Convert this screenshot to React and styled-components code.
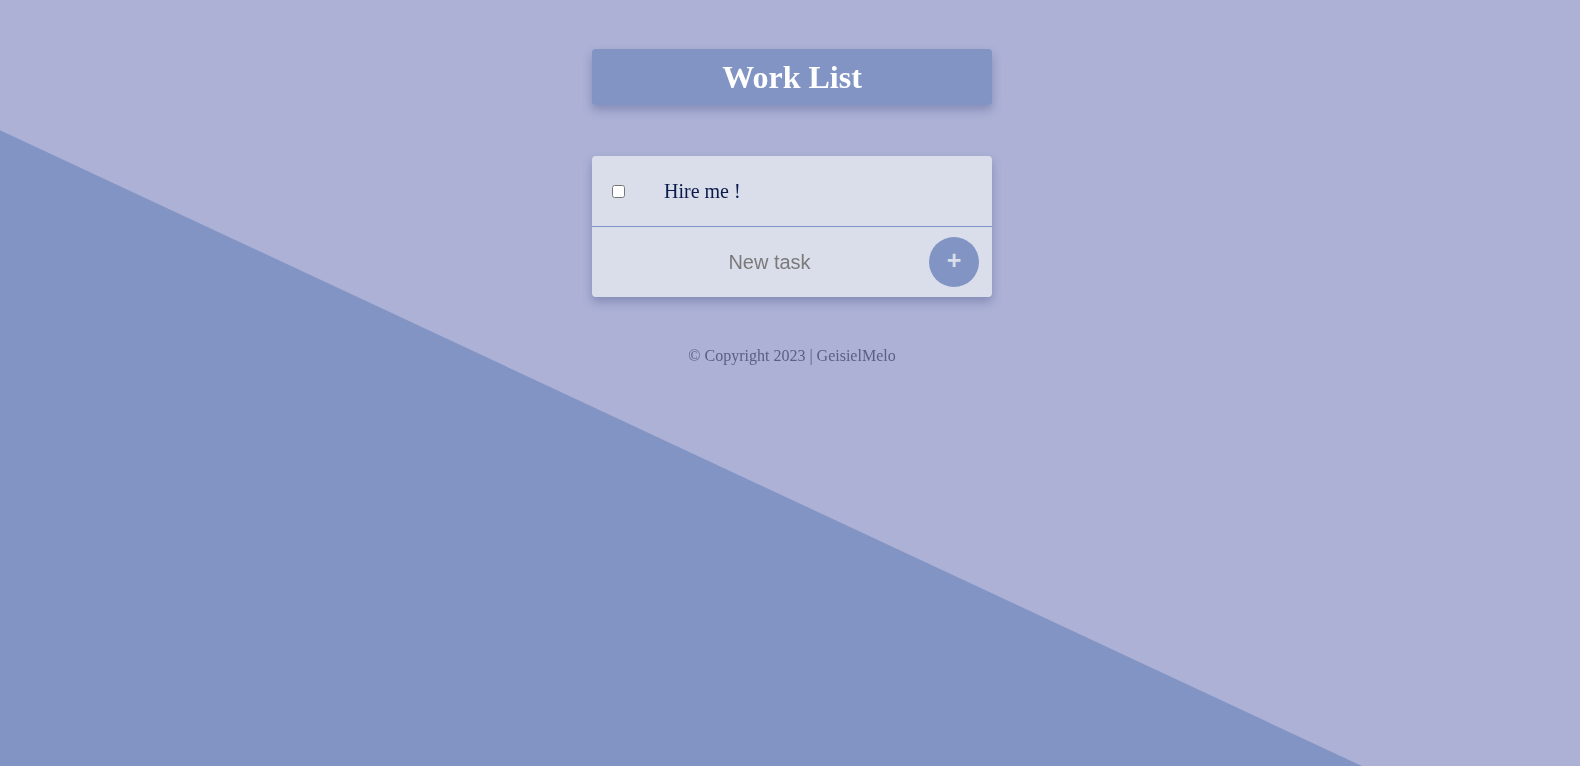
import React, { useState } from "react";
import styled, { createGlobalStyle } from "styled-components";

const lightBlue = "#acb1d5";
const darkBlue = "#8294c4";
const paper = "#dadeea";

const GlobalStyle = createGlobalStyle`
  html, body {
    margin: 0;
    padding: 0;
    min-height: 100%;
  }
  body {
    background: ${lightBlue};
    font-family: "Liberation Serif", "Times New Roman", serif;
  }
`;

export default function App() {
  const [tasks, setTasks] = useState([{ id: 1, text: "Hire me !", done: false }]);
  const [draft, setDraft] = useState("");

  const addTask = () => {
    if (!draft.trim()) return;
    setTasks([...tasks, { id: Date.now(), text: draft, done: false }]);
    setDraft("");
  };

  const toggle = (id) =>
    setTasks(tasks.map((t) => (t.id === id ? { ...t, done: !t.done } : t)));

  return (
    <>
      <GlobalStyle />
      <Backdrop />
      <Page>
        <Header>
          <Title>Work List</Title>
        </Header>
        <Card>
          {tasks.map((task) => (
            <TaskRow key={task.id}>
              <Check
                type="checkbox"
                checked={task.done}
                onChange={() => toggle(task.id)}
              />
              <TaskText $done={task.done}>{task.text}</TaskText>
            </TaskRow>
          ))}
          <NewRow>
            <NewInput
              placeholder="New task"
              value={draft}
              onChange={(e) => setDraft(e.target.value)}
              onKeyDown={(e) => e.key === "Enter" && addTask()}
            />
            <AddButton onClick={addTask}>+</AddButton>
          </NewRow>
        </Card>
        <Footer>© Copyright 2023 | GeisielMelo</Footer>
      </Page>
    </>
  );
}

const Backdrop = styled.div`
  position: fixed;
  inset: 0;
  z-index: 0;
  background: ${darkBlue};
  clip-path: polygon(0 17%, 86.2% 100%, 0 100%);
`;

const Page = styled.main`
  position: relative;
  z-index: 1;
  display: flex;
  flex-direction: column;
  align-items: center;
  padding-top: 49px;
  padding-left: 4px;
`;

const Header = styled.header`
  width: 400px;
  height: 56px;
  display: flex;
  align-items: center;
  justify-content: center;
  background: ${darkBlue};
  border-radius: 4px;
  box-shadow: 0 5px 10px rgba(75, 85, 140, 0.4);
`;

const Title = styled.h1`
  margin: 0;
  color: #fff;
  font-size: 32px;
  font-weight: 700;
`;

const Card = styled.section`
  width: 400px;
  margin-top: 51px;
  background: ${paper};
  border-radius: 4px;
  box-shadow: 0 5px 10px rgba(75, 85, 140, 0.4);
`;

const TaskRow = styled.div`
  height: 71px;
  display: flex;
  align-items: center;
  border-bottom: 1px solid ${darkBlue};
  box-sizing: border-box;
`;

const Check = styled.input`
  width: 13px;
  height: 13px;
  margin: 0 0 0 20px;
`;

const TaskText = styled.span`
  margin-left: 39px;
  font-size: 20px;
  color: #0a1a4a;
  text-decoration: ${(p) => (p.$done ? "line-through" : "none")};
`;

const NewRow = styled.div`
  position: relative;
  height: 70px;
  display: flex;
  align-items: center;
`;

const NewInput = styled.input`
  width: 100%;
  height: 100%;
  box-sizing: border-box;
  padding: 0 45px 0 0;
  border: none;
  outline: none;
  background: transparent;
  text-align: center;
  font-family: "Liberation Sans", Arial, sans-serif;
  font-size: 20px;
  color: #444;

  &::placeholder {
    color: #7a7a7a;
  }
`;

const AddButton = styled.button`
  position: absolute;
  right: 13px;
  top: 10px;
  width: 50px;
  height: 50px;
  display: flex;
  align-items: center;
  justify-content: center;
  border: none;
  border-radius: 50%;
  background: ${darkBlue};
  color: ${paper};
  font-family: "Liberation Sans", Arial, sans-serif;
  font-size: 25px;
  font-weight: 700;
  line-height: 1;
  padding: 0 0 3px;
  cursor: pointer;
`;

const Footer = styled.footer`
  margin-top: 50px;
  font-size: 16px;
  color: #5b5f82;
`;
